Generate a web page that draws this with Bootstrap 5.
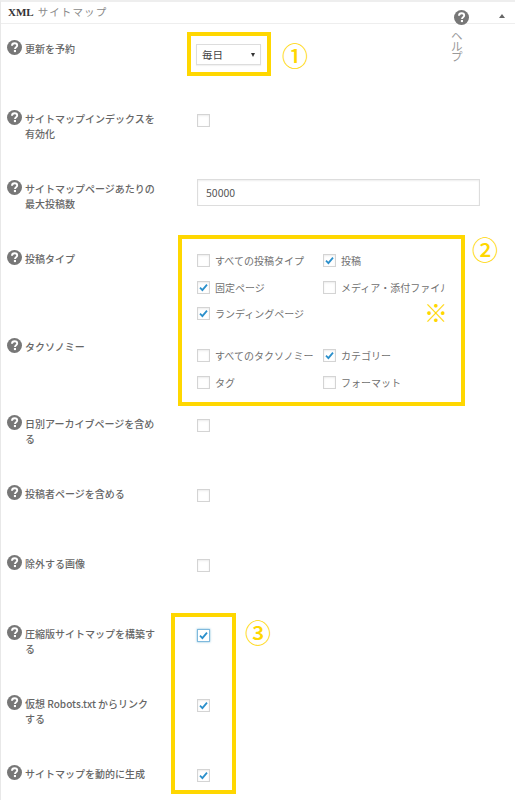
<!DOCTYPE html>
<html lang="ja">
<head>
<meta charset="utf-8">
<title>XML サイトマップ</title>
<link href="https://cdn.jsdelivr.net/npm/bootstrap@5.3.0/dist/css/bootstrap.min.css" rel="stylesheet">
<style>
html,body{height:800px;overflow:hidden}
body{background:#fff;font-family:"Noto Sans CJK JP","Liberation Sans",sans-serif;font-size:10px;color:#666;position:relative}
.panel{border-top:2px solid #eee;border-left:1px solid #e8e8e8;height:800px;position:relative}
.head{height:22px;border-bottom:1px solid #eee;padding:3px 0 0 7px;font-size:10.5px;line-height:14px;color:#8a8a8a;letter-spacing:1.1px}
.head b{font-family:"Liberation Serif",serif;font-size:11px;font-weight:600;color:#333;letter-spacing:0;margin-right:4px}
.arrow{position:absolute;top:14px;left:499px;width:0;height:0;border-left:3px solid transparent;border-right:3px solid transparent;border-bottom:4px solid #666}
.helpbox{position:absolute;left:451px;top:10px;width:20px;color:#999;font-size:11.5px;line-height:10.5px}
.helpbox svg{display:block;margin:0 0 5px 3px}
.rowx{display:flex;height:70px}
.rowx.tall{height:88px}
.rowx.cut{height:77px}
.lab{width:196px;display:flex;gap:3px;flex:none;padding:16px 0 0 6px}
.lab svg{flex:none}
.lab span{font-weight:500;color:#666;line-height:15.4px;width:131px;margin-top:1px}
.val{flex:1}
input.cb{appearance:none;-webkit-appearance:none;display:block;width:13px;height:13px;border:1px solid #d4d4d4;background:#fff;border-radius:0;margin:0;box-shadow:inset 0 1px 2px rgba(0,0,0,.08);flex:none}
input.cb:checked{background:#fff url("data:image/svg+xml,%3Csvg xmlns='http://www.w3.org/2000/svg' viewBox='0 0 13 13'%3E%3Cpath d='M3 6.7l2.4 2.4 4.6-5.4' fill='none' stroke='%232a8fcb' stroke-width='1.8'/%3E%3C/svg%3E") center/13px no-repeat}
input.cb.foc{border-color:#7fb9dd;box-shadow:0 0 2px rgba(30,140,190,.6)}
.single{padding-top:20px}
.opts{display:grid;grid-template-columns:126px 122px;row-gap:13.7px;padding-top:20px}
.opts.low{padding-top:27px}
.opt{display:flex;align-items:center;gap:5px;height:13px;white-space:nowrap;overflow:hidden;color:#707070}
.picker{width:65px;height:21px;margin:20px 0 0 -1px;border:1px solid #ddd;display:flex;align-items:center;justify-content:space-between;padding:0 5px;font-size:10.5px;color:#444;box-shadow:0 1px 1px rgba(0,0,0,.05)}
.caret{width:0;height:0;border-left:2.5px solid transparent;border-right:2.5px solid transparent;border-top:4px solid #333}
.numbox{width:283px;height:27px;margin-top:15px;border:1px solid #ddd;padding:0 8px;font-size:10.5px;line-height:25px;color:#555;box-shadow:inset 0 1px 2px rgba(0,0,0,.07)}
.mk{position:absolute;border:4px solid #ffd700;pointer-events:none}
.glyph{position:absolute;color:#ffd700;line-height:1;font-weight:500;font-family:"Noto Sans CJK JP",sans-serif}
</style>
</head>
<body>
<svg width="0" height="0" class="d-block position-absolute"><defs>
<symbol id="q" viewBox="0 0 15 15"><circle cx="7.5" cy="7.5" r="7.5" fill="#777"/><path d="M5 5.7C5 4.2 6.1 3.2 7.6 3.2S10.2 4.1 10.2 5.5C10.2 7.3 8 7.3 8 9" fill="none" stroke="#fff" stroke-width="1.9"/><rect x="6.9" y="10" width="2.1" height="2.1" fill="#fff"/></symbol>
</defs></svg>
<div class="panel">
  <div class="head"><b>XML</b>サイトマップ</div>
  <div class="rowx"><div class="lab"><svg width="15" height="15"><use href="#q"/></svg><span>更新を予約</span></div>
    <div class="val"><div class="picker"><span>毎日</span><i class="caret"></i></div></div></div>
  <div class="rowx"><div class="lab"><svg width="15" height="15"><use href="#q"/></svg><span>サイトマップインデックスを有効化</span></div>
    <div class="val single"><input type="checkbox" class="cb"></div></div>
  <div class="rowx"><div class="lab"><svg width="15" height="15"><use href="#q"/></svg><span>サイトマップページあたりの最大投稿数</span></div>
    <div class="val"><div class="numbox">50000</div></div></div>
  <div class="rowx tall"><div class="lab"><svg width="15" height="15"><use href="#q"/></svg><span>投稿タイプ</span></div>
    <div class="val"><div class="opts">
      <label class="opt"><input type="checkbox" class="cb">すべての投稿タイプ</label>
      <label class="opt"><input type="checkbox" class="cb" checked>投稿</label>
      <label class="opt"><input type="checkbox" class="cb" checked>固定ページ</label>
      <label class="opt"><input type="checkbox" class="cb">メディア・添付ファイル</label>
      <label class="opt"><input type="checkbox" class="cb" checked>ランディングページ</label>
    </div></div></div>
  <div class="rowx cut"><div class="lab"><svg width="15" height="15"><use href="#q"/></svg><span>タクソノミー</span></div>
    <div class="val"><div class="opts low">
      <label class="opt"><input type="checkbox" class="cb">すべてのタクソノミー</label>
      <label class="opt"><input type="checkbox" class="cb" checked>カテゴリー</label>
      <label class="opt"><input type="checkbox" class="cb">タグ</label>
      <label class="opt"><input type="checkbox" class="cb">フォーマット</label>
    </div></div></div>
  <div class="rowx"><div class="lab"><svg width="15" height="15"><use href="#q"/></svg><span>日別アーカイブページを含める</span></div>
    <div class="val single"><input type="checkbox" class="cb"></div></div>
  <div class="rowx"><div class="lab"><svg width="15" height="15"><use href="#q"/></svg><span>投稿者ページを含める</span></div>
    <div class="val single"><input type="checkbox" class="cb"></div></div>
  <div class="rowx"><div class="lab"><svg width="15" height="15"><use href="#q"/></svg><span>除外する画像</span></div>
    <div class="val single"><input type="checkbox" class="cb"></div></div>
  <div class="rowx"><div class="lab"><svg width="15" height="15"><use href="#q"/></svg><span>圧縮版サイトマップを構築する</span></div>
    <div class="val single"><input type="checkbox" class="cb foc" checked></div></div>
  <div class="rowx"><div class="lab"><svg width="15" height="15"><use href="#q"/></svg><span>仮想 Robots.txt からリンクする</span></div>
    <div class="val single"><input type="checkbox" class="cb" checked></div></div>
  <div class="rowx"><div class="lab"><svg width="15" height="15"><use href="#q"/></svg><span>サイトマップを動的に生成</span></div>
    <div class="val single"><input type="checkbox" class="cb" checked></div></div>
</div>
<i class="arrow"></i>
<div class="helpbox"><svg width="15" height="15"><use href="#q"/></svg>ヘ<br>ル<br>プ</div>
<div class="mk" style="left:187px;top:32px;width:84px;height:44px"></div>
<div class="mk" style="left:178px;top:235px;width:287px;height:171px"></div>
<div class="mk" style="left:171px;top:613px;width:65px;height:181px"></div>
<div class="glyph" style="left:282px;top:42px;font-size:26px">①</div>
<div class="glyph" style="left:472px;top:236px;font-size:26px">②</div>
<div class="glyph" style="left:245px;top:619px;font-size:26px">③</div>
<div class="glyph" style="left:424px;top:300px;font-size:24px">※</div>
</body>
</html>
